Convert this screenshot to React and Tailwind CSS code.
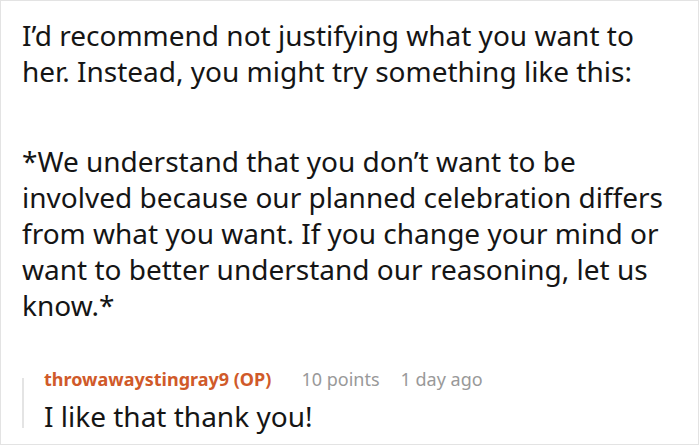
export default function App() {
  return (
    <div className="w-[699px] h-[445px] bg-white border border-[#e3e3e3] box-border overflow-hidden font-['Noto_Sans',sans-serif] text-[#151515]">
      <div className="pl-[21px] pr-[26px] pt-[16px] text-[28px] leading-[36px]">
        <p>I’d recommend not justifying what you want to her. Instead, you might try something like this:</p>
        <p className="mt-[54px]">
          *We understand that you don’t want to be involved because our planned celebration differs from what you want. If you change your mind or want to better understand our reasoning, let us know.*
        </p>
      </div>
      <div className="ml-[21px] mt-[44px] flex">
        <div className="w-[2px] bg-[#e4e4e4] mt-[11px] mb-[6px]" />
        <div className="pl-[20px]">
          <div className="flex items-baseline text-[18px] leading-[24px]">
            <span className="font-bold text-[#d05a2a]">throwawaystingray9 (OP)</span>
            <span className="ml-[30px] text-[#999]">10 points</span>
            <span className="ml-[21px] text-[#999]">1 day ago</span>
          </div>
          <p className="mt-[7px] text-[28px] leading-[36px]">I like that thank you!</p>
        </div>
      </div>
    </div>
  );
}
